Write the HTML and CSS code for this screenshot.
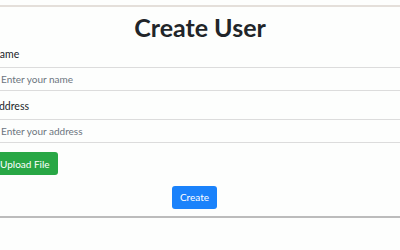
FILE: index.html
```html
<!DOCTYPE html>
<html lang="en">
<head>
    <meta charset="UTF-8">
    <meta name="viewport" content="width=device-width, initial-scale=1.0">
    <title>Create User</title>
    <link rel="stylesheet" href="styles.css">
</head>
<body>
    <form class="card" id="createUser">
        <h1 class="title">Create User</h1>

        <label class="field-label" for="name">Name</label>
        <input class="field" type="text" id="name" name="name" placeholder="Enter your name">

        <label class="field-label" for="address">Address</label>
        <input class="field" type="text" id="address" name="address" placeholder="Enter your address">

        <div class="upload-row">
            <button type="button" class="btn btn-upload">Upload File</button>
        </div>

        <div class="submit-row">
            <button type="submit" class="btn btn-create">Create</button>
        </div>
    </form>
</body>
</html>
```

FILE: styles.css
```css
body {
    font-family: 'Lato', 'Noto Sans', sans-serif;
    background-color: #fdfefd;
    color: #212529;
    margin: 0;
    padding: 0;
}

.card {
    margin: 5px -20px 0 -20px;
    padding: 5px 12px 7px 12px;
    border-top: 2px solid #e4dfda;
    border-bottom: 2px solid #bcbcbc;
    background-color: #fdfefd;
}

.title {
    margin: 0 0 5px 0;
    font-size: 25px;
    font-weight: 700;
    line-height: 1.2;
    text-align: center;
    color: #212529;
}

.field-label {
    display: block;
    font-size: 10.5px;
    line-height: 1.5;
    margin-bottom: 4px;
}

.field {
    display: block;
    width: 100%;
    height: 24px;
    padding: 0 8px;
    margin-bottom: 8px;
    border: 1px solid #dcdcdc;
    border-radius: 3px;
    box-sizing: border-box;
    font-family: inherit;
    font-size: 10px;
    color: #495057;
    background-color: #fdfefd;
}

.field::placeholder {
    color: #6c757d;
}

.upload-row {
    padding-top: 1px;
}

.btn {
    height: 23px;
    padding: 0 8px;
    border: none;
    border-radius: 3px;
    font-family: inherit;
    font-size: 10px;
    color: #fff;
    cursor: pointer;
}

.btn-upload {
    background-color: #28a745;
}

.submit-row {
    margin-top: 10px;
    text-align: center;
}

.btn-create {
    background-color: #1a82fb;
    margin-right: 11px;
}
```
